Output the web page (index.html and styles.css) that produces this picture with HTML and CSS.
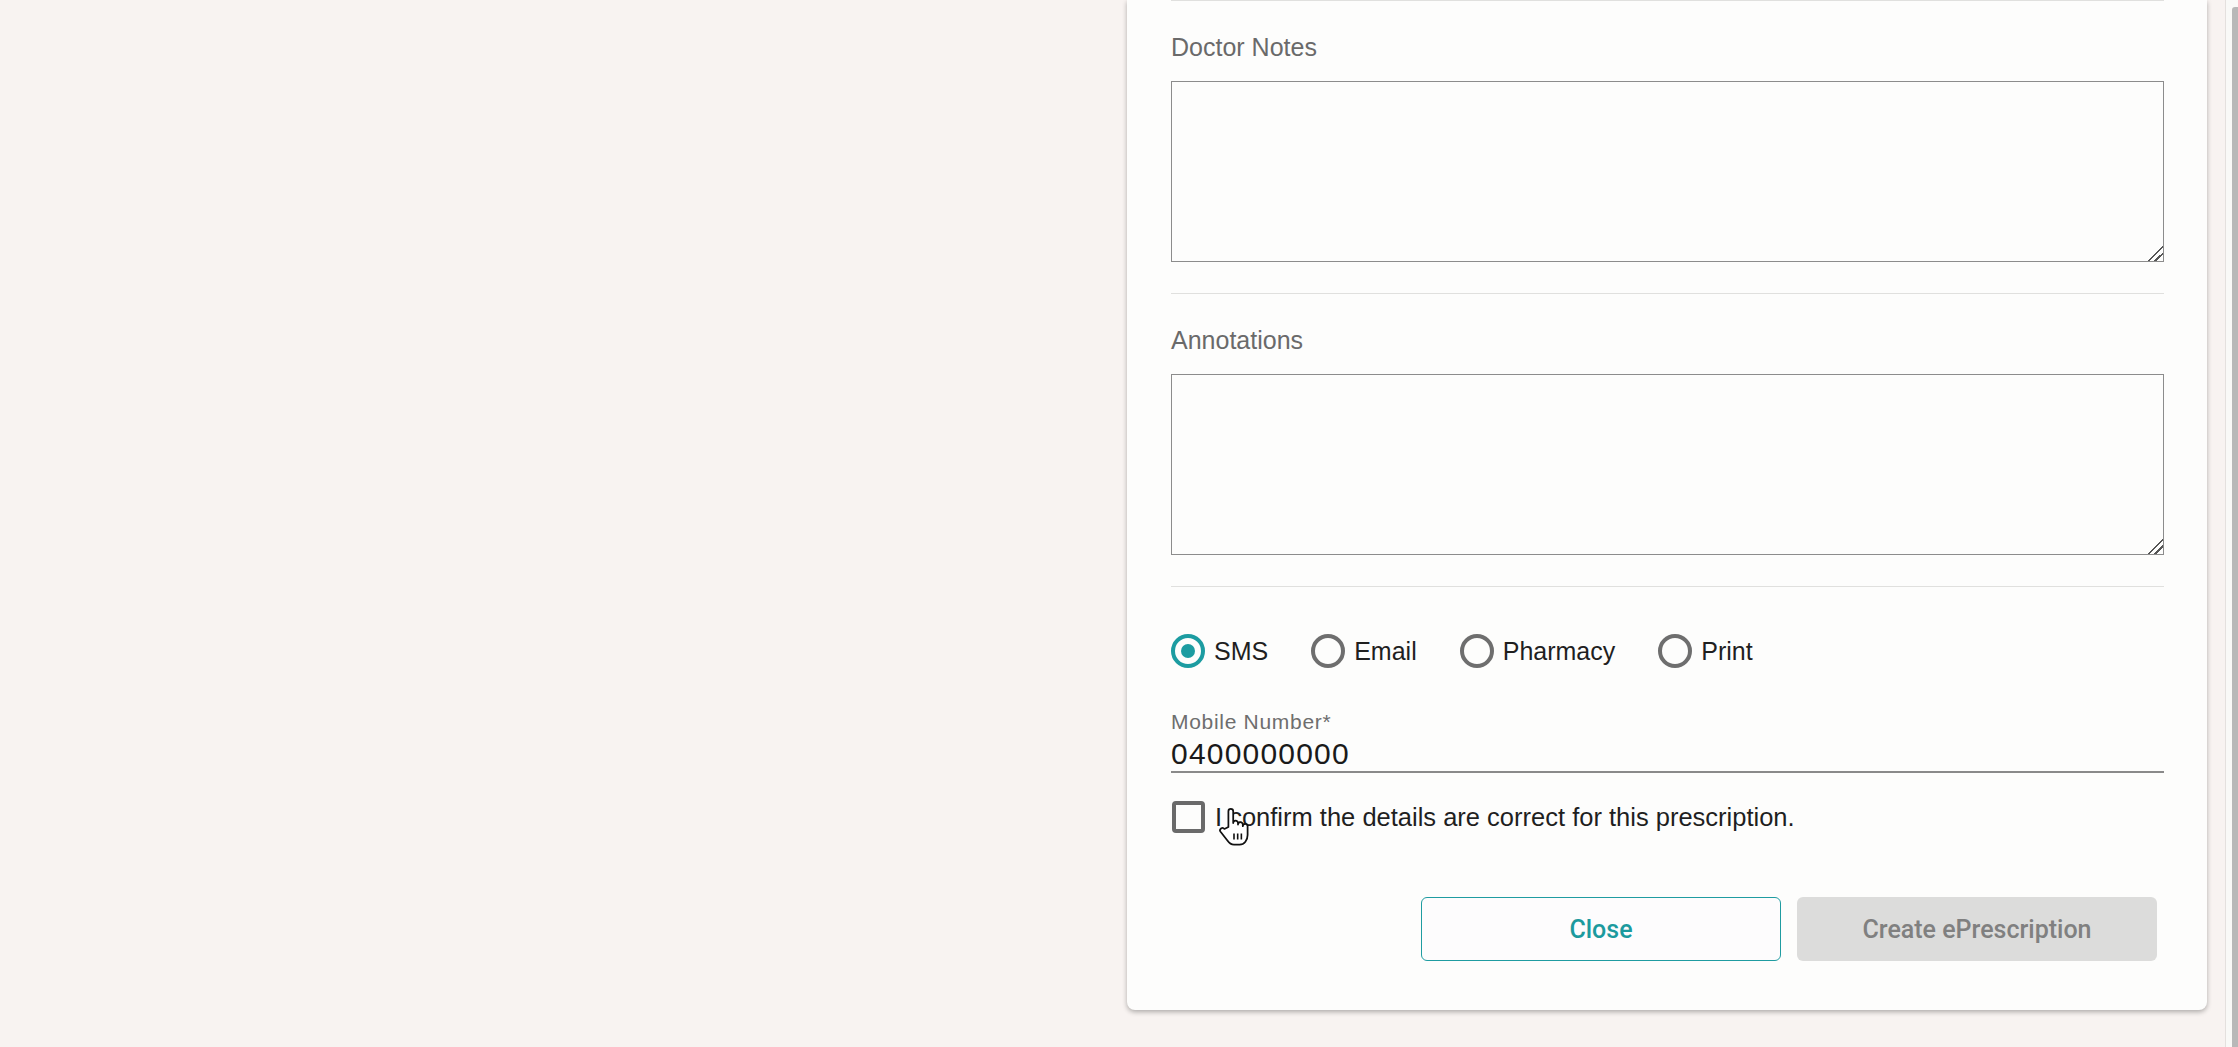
FILE: index.html
```html
<!DOCTYPE html>
<html lang="en">
<head>
    <meta charset="UTF-8">
    <meta name="viewport" content="width=device-width, initial-scale=1.0">
    <title>Create ePrescription</title>
    <link rel="stylesheet" href="styles.css">
</head>
<body>
    <div class="page">
        <main class="stage">
            <section class="panel">

                <div class="field-block">
                    <label class="block-label" for="doctorNotes">Doctor Notes</label>
                    <textarea id="doctorNotes" class="notes"></textarea>
                </div>

                <div class="field-block">
                    <label class="block-label" for="annotations">Annotations</label>
                    <textarea id="annotations" class="notes"></textarea>
                </div>

                <div class="delivery">
                    <div class="radio-row">
                        <label class="radio"><input type="radio" name="delivery" value="sms" checked> SMS</label>
                        <label class="radio"><input type="radio" name="delivery" value="email"> Email</label>
                        <label class="radio"><input type="radio" name="delivery" value="pharmacy"> Pharmacy</label>
                        <label class="radio"><input type="radio" name="delivery" value="print"> Print</label>
                    </div>

                    <div class="mobile-field">
                        <label for="mobileNumber">Mobile Number*</label>
                        <input type="tel" id="mobileNumber" value="0400000000">
                    </div>

                    <label class="confirm">
                        <input type="checkbox" id="confirmDetails">
                        I confirm the details are correct for this prescription.
                        <!-- mouse pointer captured in the screenshot -->
                        <svg class="pointer" width="32" height="40" viewBox="0 0 20 25">
                            <path d="M6.5 12.5V2.6a1.5 1.5 0 0 1 3 0V10a1.5 1.5 0 0 1 3 0v1a1.5 1.5 0 0 1 3 0v1a1.5 1.5 0 0 1 3 0v5.5c0 3.2-2 6-5 6h-3.5c-1.8 0-3-0.9-4-2.4L1.6 15.5a1.5 1.5 0 0 1 2.4-1.8z" fill="#fff" stroke="#111" stroke-width="1.1" stroke-linejoin="round"/>
                            <path d="M10 16.5v3.8M12.3 16.5v3.8M14.6 16.5v3.8" stroke="#111" stroke-width="1"/>
                        </svg>
                    </label>
                </div>

                <div class="actions">
                    <button class="btn btn-outline" id="closeButton">Close</button>
                    <button class="btn btn-disabled" id="createButton" disabled>Create ePrescription</button>
                </div>

            </section>
        </main>

        <div class="scrollbar"><div class="thumb"></div></div>
    </div>
</body>
</html>
```

FILE: styles.css
```css
body {
    margin: 0;
    font-family: "Liberation Sans", Arial, sans-serif;
    background-color: #f8f3f1;
    color: #1f1f1f;
    overflow: hidden;
}
.page {
    display: flex;
    height: 100vh;
}
.stage {
    flex: 1;
    display: flex;
    justify-content: flex-end;
    align-items: flex-start;
    padding-right: 18px;
}
.panel {
    width: 1080px;
    box-sizing: border-box;
    padding: 0 43px 49px 44px;
    background-color: #fdfdfc;
    border-radius: 0 0 8px 8px;
    box-shadow: 0 2px 5px rgba(0, 0, 0, 0.3);
}
.field-block {
    border-top: 1px solid #e0e0de;
    padding: 31px 0 31px;
}
.block-label {
    display: block;
    font-size: 25px;
    line-height: 30px;
    color: #6a6a6a;
    margin-bottom: 19px;
}
.notes {
    display: block;
    width: 100%;
    height: 181px;
    box-sizing: border-box;
    border: 1px solid #8c8c8c;
    border-radius: 0;
    background-color: #fdfdfc;
    resize: vertical;
    font-family: inherit;
    font-size: 20px;
    padding: 8px;
}
.notes::-webkit-scrollbar {
    width: 18px;
    height: 18px;
}
.notes::-webkit-resizer {
    background: linear-gradient(135deg, transparent 47%, #555 47%, #555 54%, transparent 54%, transparent 70%, #555 70%, #555 77%, transparent 77%);
}
.delivery {
    border-top: 1px solid #e0e0de;
    padding-top: 47px;
}
.radio-row {
    display: flex;
    gap: 43px;
}
.radio {
    display: flex;
    align-items: center;
    gap: 9px;
    font-size: 25px;
    line-height: 34px;
    color: #1f1f1f;
}
.radio input {
    appearance: none;
    margin: 0;
    width: 34px;
    height: 34px;
    box-sizing: border-box;
    border: 4px solid #6e6e6e;
    border-radius: 50%;
    display: grid;
    place-content: center;
}
.radio input:checked {
    border-color: #1c9ca1;
}
.radio input:checked::before {
    content: "";
    width: 14px;
    height: 14px;
    border-radius: 50%;
    background-color: #1c9ca1;
}
.mobile-field {
    margin-top: 42px;
}
.mobile-field label {
    display: block;
    font-size: 21px;
    line-height: 24px;
    letter-spacing: 0.7px;
    color: #6e6e6e;
    margin-bottom: 3px;
}
.mobile-field input {
    display: block;
    width: 100%;
    height: 36px;
    box-sizing: border-box;
    padding: 0;
    border: none;
    border-bottom: 2px solid #8a8a8a;
    background: transparent;
    font-family: inherit;
    font-size: 30px;
    line-height: 34px;
    letter-spacing: 1.2px;
    color: #1a1a1a;
    outline: none;
}
.confirm {
    position: relative;
    display: flex;
    align-items: center;
    gap: 10px;
    margin-top: 28px;
    font-size: 25.5px;
    line-height: 32px;
    color: #1f1f1f;
}
.confirm input {
    appearance: none;
    margin: 0 0 0 1px;
    width: 33px;
    height: 32px;
    box-sizing: border-box;
    border: 4px solid #6a6a6a;
    border-radius: 4px;
}
.pointer {
    position: absolute;
    left: 47px;
    top: 6px;
}
.actions {
    display: flex;
    justify-content: flex-end;
    gap: 16px;
    margin-top: 64px;
    padding-right: 7px;
}
.btn {
    width: 360px;
    height: 64px;
    border-radius: 6px;
    font-family: Roboto, "Liberation Sans", sans-serif;
    font-size: 25px;
    font-weight: 500;
    cursor: pointer;
}
.btn-outline {
    background-color: #fdfcfd;
    border: 1px solid #1f9ca1;
    color: #1c9a9e;
}
.btn-disabled {
    background-color: #dcdcdb;
    border: none;
    color: #808080;
    cursor: default;
}
.scrollbar {
    width: 12px;
    border-left: 1px solid #e4e0de;
    background-color: #f9f9f7;
    padding-top: 7px;
    display: flex;
    justify-content: flex-end;
}
.thumb {
    width: 6px;
    background-color: #b8b8b8;
    border-radius: 3px 0 0 0;
}
```
